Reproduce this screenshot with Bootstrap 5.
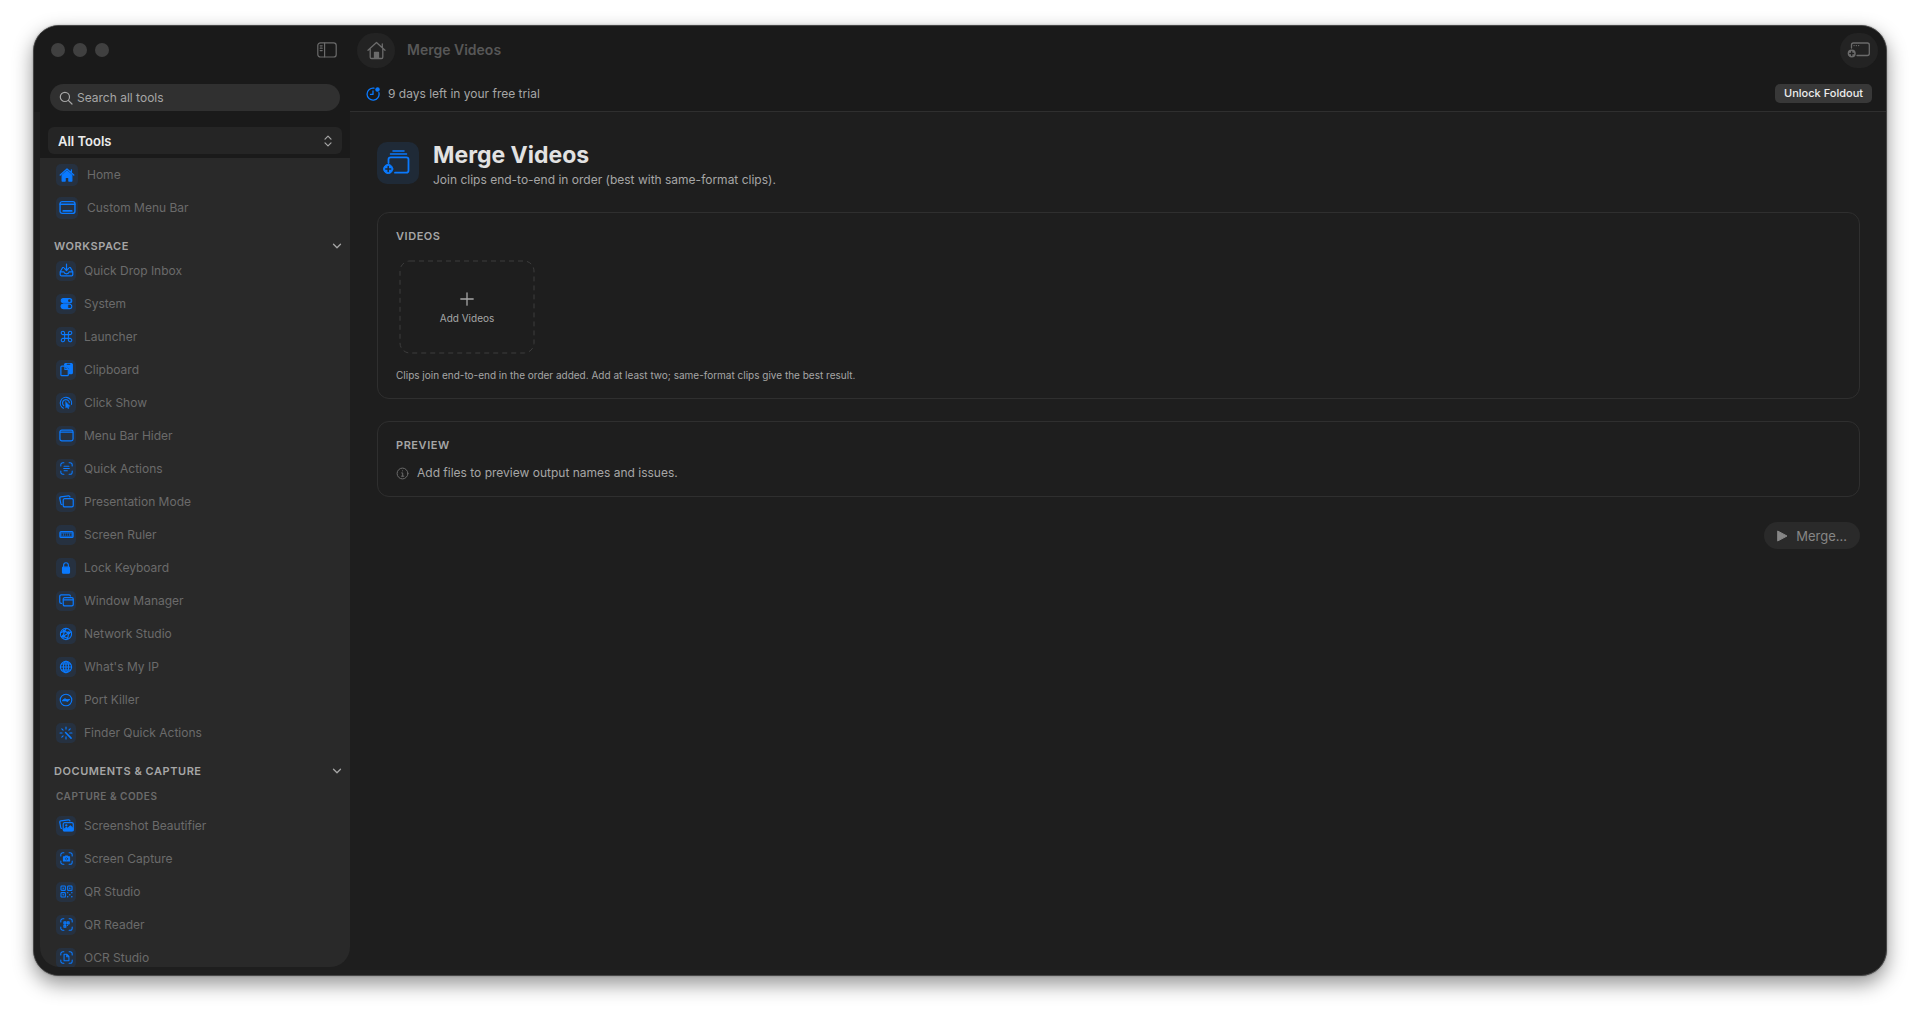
<!DOCTYPE html>
<html lang="en" data-bs-theme="dark">
<head>
<meta charset="utf-8">
<meta name="viewport" content="width=device-width, initial-scale=1">
<title>Merge Videos</title>
<link href="https://cdn.jsdelivr.net/npm/bootstrap@5.3.0/dist/css/bootstrap.min.css" rel="stylesheet">
<style>
  :root { --accent: #0a7aff; --tile: #263140; --bar: #1a1a1a; --pane: #1e1e1e; --muted: #6b6b6b; --soft: #a6a6a6; }
  body { background: #fff; font-family: Inter, "Liberation Sans", sans-serif; font-size: 12px; line-height: 16px; color: var(--soft); padding: 25px 33px 40px; height: 100vh; }
  svg { display: block; fill: none; stroke: currentColor; stroke-linecap: round; stroke-linejoin: round; flex: none; }
  a { color: inherit; text-decoration: none; }
  .app-window { background: var(--pane); border: 1px solid #474747; border-radius: 26px; overflow: hidden; box-shadow: 0 8px 20px rgba(0,0,0,.42), 0 0 2px rgba(0,0,0,.3); }
  .side { width: 316px; padding: 0 0 8px 6px; background: linear-gradient(var(--bar) 86px, var(--pane) 86px); }
  .side-head { background: var(--bar); padding: 0 8px 4px; }
  .side-top { height: 48px; padding: 0 5px 0 3px; }
  .dots { gap: 8px; }
  .dots span { width: 14px; height: 14px; border-radius: 50%; background: #404040; }
  .plain { background: none; border: 0; padding: 0; color: var(--muted); }
  .search-box { background: #303030; border-radius: 14px; height: 27px; margin: 10px 2px 16px; padding: 0 9px; gap: 4px; }
  .search-box input { background: none; border: 0; outline: 0; padding: 0; font-size: 12px; color: var(--soft); width: 100%; }
  .search-box input::placeholder { color: var(--soft); opacity: 1; }
  .picker { position: relative; }
  .picker select { appearance: none; width: 100%; height: 27px; border: 0; border-radius: 6px; background: #252525; color: #ececec; font-weight: 600; font-size: 13px; padding: 0 10px; }
  .picker svg { position: absolute; right: 10px; top: 8px; pointer-events: none; }
  .tool-list { background: #292929; border-radius: 0 0 20px 20px; min-height: 0; overflow-y: auto; scrollbar-width: none; }
  .tool { height: 33px; padding-left: 16px; gap: 8px; color: var(--muted); }
  .tool .tile { width: 20px; height: 20px; border-radius: 5px; }
  .tool svg { stroke-width: 1.3; }
  .tool.wide { gap: 9px; }
  .tool.wide .tile { width: 22px; height: 22px; }
  .tile { background: var(--tile); color: var(--accent); display: flex; align-items: center; justify-content: center; flex: none; }
  .fold { width: 100%; height: 17px; margin-top: 13px; padding: 0 8px 0 14px; color: var(--soft); }
  .caps { font-size: 11px; font-weight: 600; letter-spacing: .05em; margin: 0; line-height: 16px; text-transform: uppercase; color: var(--soft); }
  .subcaps { font-size: 10px; color: var(--muted); padding: 9px 16px 5px; }
  .topbar { background: var(--bar); height: 48px; padding: 0 8px 0 7px; gap: 12px; }
  .round { width: 38px; height: 35px; border: 0; border-radius: 18px; background: #232323; color: var(--muted); padding: 0; display: flex; align-items: center; justify-content: center; }
  .page-name { font-size: 14px; font-weight: 600; color: #575757; }
  .trial { background: var(--bar); border-bottom: 1px solid #2f2f2f; height: 38px; padding: 2px 14px 0 16px; }
  .trial span { gap: 8px; }
  .trial svg { color: var(--accent); }
  .note svg { color: var(--muted); }
  .unlock { border: 0; border-radius: 5px; background: #383838; color: #ececec; font-size: 11px; font-weight: 500; height: 19px; line-height: 19px; padding: 0 9px; }
  .work { padding: 30px 26px 30px 27px; }
  .hero { gap: 14px; margin-bottom: 24px; }
  .hero .tile { width: 42px; height: 42px; border-radius: 10px; background: #1f2a37; }
  .hero h1 { font-size: 23px; line-height: 26px; font-weight: 700; color: #e2e2e2; margin: 0 0 4px; }
  .panel { border: 1px solid #2f2f2f; border-radius: 12px; padding: 15px 18px; margin-bottom: 22px; }
  .drop { width: 136px; height: 94px; border: 0; background: none; margin: 16px 0 13px 3px; position: relative; color: var(--soft); font-size: 10px; gap: 4px; padding: 3px 0 0; }
  .drop .frame { position: absolute; inset: 0; width: 100%; height: 100%; stroke: #3c3c3c; }
  .hint { font-size: 10px; }
  .note { gap: 8px; margin-top: 12px; }
  .merge { border: 0; border-radius: 14px; height: 27px; margin-top: 3px; padding: 0 13px; gap: 8px; background: #2a2a2a; color: #868686; font-size: 13px; }
</style>
</head>
<body class="d-flex">
<svg class="d-none" xmlns="http://www.w3.org/2000/svg">
  <symbol id="i-house" viewBox="0 0 16 16"><path d="M1.2 8 8 2l6.800 6M12.400 5.500V2.800"/><path d="M3.200 8.200 8 4l4.800 4.200V14H9.900v-3.600H6.100V14H3.200z" fill="currentColor"/></symbol>
  <symbol id="i-menubar" viewBox="0 0 16 16"><rect x="1" y="2.500" width="14" height="11" rx="2"/><path d="M1 5h14" /><path d="M4 11.200h8" stroke-width="1.600"/></symbol>
  <symbol id="i-inbox" viewBox="0 0 16 16"><path d="M8 1.200v6.600M5.800 5.800 8 8l2.200-2.200M5 4.800H3.900L1.300 9.300v3.200c0 .8.500 1.300 1.300 1.300h10.800c.8 0 1.300-.5 1.300-1.300V9.300L12.100 4.800H11M1.300 9.500h3.900c.3 1.400 1.400 2 2.800 2s2.500-.6 2.800-2h3.900"/></symbol>
  <symbol id="i-switches" viewBox="0 0 16 16"><rect x="1.500" y="1.800" width="13" height="5.400" rx="2.700" fill="currentColor"/><circle cx="11.500" cy="4.500" r="1.600" fill="#263140" stroke="none"/><rect x="1.500" y="8.900" width="13" height="5.400" rx="2.700"/><path d="M4 9h5.500v5H4a2.500 2.500 0 0 1 0-5z" fill="currentColor"/></symbol>
  <symbol id="i-command" viewBox="0 0 16 16"><path d="M5.700 5.700h4.600v4.600H5.700zM5.700 5.700H3.800a2.100 2.100 0 1 1 1.900-1.900zM10.300 5.700V3.800a2.100 2.100 0 1 1 1.900 1.900zM10.300 10.300h1.900a2.100 2.100 0 1 1-1.900 1.900zM5.700 10.300v1.900a2.100 2.100 0 1 1-1.900-1.900z"/></symbol>
  <symbol id="i-clipboard" viewBox="0 0 16 16"><path d="M6 3.500V2.600c0-.6.400-1 1-1h6.200c.6 0 1 .4 1 1v8.900c0 .6-.4 1-1 1H11V7L7.500 4z" fill="currentColor"/><path d="M8.800 2.400h2.600" stroke="#263140"/><path d="M3 4.500h3.500L9.900 8v5.500c0 .6-.4 1-1 1H3c-.6 0-1-.4-1-1v-8c0-.6.400-1 1-1z" fill="#263140"/><path d="M6.300 4.700V8h3.500"/></symbol>
  <symbol id="i-click" viewBox="0 0 16 16"><path d="M5 13.900A6.500 6.500 0 1 1 14.300 9.500M5.400 11A3.900 3.900 0 1 1 11.800 7.500"/><path d="m7.600 6.600.2 7 1.500-1.300.9 2.100 1.200-.5-.9-2 1.900-.3z" fill="currentColor" stroke-width=".6"/></symbol>
  <symbol id="i-window" viewBox="0 0 16 16"><rect x="1" y="2.300" width="14" height="11.400" rx="2"/><path d="M1.500 4.400h13" stroke-width="1.500"/></symbol>
  <symbol id="i-frame" viewBox="0 0 16 16"><path d="M1 4.800V3.500C1 2 2 1 3.500 1h1.300M11.200 1h1.300C14 1 15 2 15 3.500v1.300M15 11.200v1.300c0 1.500-1 2.500-2.500 2.500h-1.300M4.800 15H3.500C2 15 1 14 1 12.500v-1.300"/></symbol>
  <symbol id="i-textscan" viewBox="0 0 16 16"><use href="#i-frame"/><path d="M5 5.300h6M4.500 8h7M5 10.700h4"/></symbol>
  <symbol id="i-stack" viewBox="0 0 16 16"><rect x="4.500" y="5" width="10.700" height="8.800" rx="1.500"/><path d="M3.200 11.300c-.8 0-1.200-.5-1.300-1.200L.8 4.500c-.1-.8.300-1.400 1.100-1.500l8.200-1c.8-.1 1.400.4 1.600 1.200"/></symbol>
  <symbol id="i-ruler" viewBox="0 0 16 16"><rect x="1" y="4.800" width="14" height="6.400" rx="1.200" fill="#1259b0"/><path d="M3.500 7.500v1.200M6 7.500v1.200M8 7.500v1.200M10 7.500v1.200M12.500 7.500v1.200" stroke="#263140"/></symbol>
  <symbol id="i-lock" viewBox="0 0 16 16"><rect x="4" y="7" width="8" height="7" rx="1" fill="currentColor"/><path d="M5.300 7V4.700a2.700 2.700 0 0 1 5.400 0V7"/></symbol>
  <symbol id="i-windows" viewBox="0 0 16 16"><rect x="4.500" y="5" width="10.700" height="8.800" rx="1.500"/><path d="M4.700 7.300h10.200M2.800 11H2.300C1.400 11 .8 10.400.8 9.500v-6C.8 2.600 1.400 2 2.300 2h8.500c.8 0 1.300.5 1.400 1.200"/></symbol>
  <symbol id="i-globe" viewBox="0 0 16 16"><circle cx="8" cy="8" r="6.400"/><ellipse cx="8" cy="8" rx="3" ry="6.400"/><path d="M8 1.600v12.800M1.600 8h12.800M2.700 4.600h10.600M2.700 11.400h10.600"/></symbol>
  <symbol id="i-network" viewBox="0 0 16 16"><circle cx="8" cy="8" r="6.400"/><path d="M1.800 6.500 6 4.700l5 2 3.300-.9M6 4.700 8.500 1.700M6 4.700l-1 5.800 5 2.600M11 6.700l-1 6.400M5 10.500l6-3.800M2.500 11l2.500-.5"/><circle cx="6" cy="4.700" r="1" fill="currentColor"/><circle cx="11" cy="6.700" r="1.200" fill="currentColor"/><circle cx="5" cy="10.500" r="1.200" fill="currentColor"/></symbol>
  <symbol id="i-port" viewBox="0 0 16 16"><circle cx="8" cy="8" r="6.600"/><path d="M4 8.700 6.700 6.700l2.300 1.200 3-.4-2.500 2-2.200-1z" fill="currentColor"/></symbol>
  <symbol id="i-wand" viewBox="0 0 16 16"><path d="m7.500 7.500 6.300 6.300" stroke-width="1.800"/><path d="M8 1.200v2.300M8 12.300v2.500M1.200 8h2.300M12.300 8h2.500M3.200 3.200 4.700 4.700M12.800 3.200l-1.500 1.500M3.200 12.800l1.500-1.500"/></symbol>
  <symbol id="i-photos" viewBox="0 0 16 16"><rect x="4.500" y="5" width="10.700" height="8.800" rx="1.500"/><path d="M2.800 11c-.6 0-.9-.5-1-1.100L.8 4.500c-.1-.8.300-1.400 1.100-1.500l8.200-1c.8-.1 1.400.4 1.600 1.200"/><path d="m4.800 12.500 3-2.500 1.700 1.200 2.600-2.700 2.800 2.700v2.300H5z" fill="currentColor"/><circle cx="7.800" cy="7.800" r=".6" fill="currentColor"/></symbol>
  <symbol id="i-camscan" viewBox="0 0 16 16"><use href="#i-frame"/><path d="M4.200 6h1.700l.8-1h2.600l.8 1h1.700v5H4.200z" fill="currentColor"/><circle cx="8" cy="8.400" r="1.400" stroke="#263140" stroke-width=".7"/></symbol>
  <symbol id="i-qr" viewBox="0 0 16 16"><rect x="1.200" y="1.200" width="5.400" height="5.400" rx=".8"/><rect x="9.400" y="1.200" width="5.400" height="5.400" rx=".8"/><rect x="1.200" y="9.400" width="5.400" height="5.400" rx=".8"/><path d="M3.900 3.900h.1M12 3.900h.1M3.900 12h.1M9.400 9.400h.1M14.500 9.400h.1M12 12h.1M9.400 14.500h.1M14.500 14.500h.1" stroke-width="1.800"/></symbol>
  <symbol id="i-qrscan" viewBox="0 0 16 16"><use href="#i-frame"/><path d="M4.800 4.800h2.400v2.400H4.800zM8.900 4.800h2.400v2.400H8.900zM4.800 8.900h2.400v2.400H4.800zM9.200 9.200h.2" fill="currentColor" fill-opacity=".5"/></symbol>
  <symbol id="i-docscan" viewBox="0 0 16 16"><use href="#i-frame"/><path d="M5 4h3.500L11 6.500V12H5zM8.300 4.200V7H11"/></symbol>
  <symbol id="i-chev" viewBox="0 0 10 10"><path d="m1.500 3.300 3.500 3.500 3.500-3.500"/></symbol>
</svg>

<div class="app-window d-flex flex-grow-1">
  <aside class="side d-flex flex-column flex-shrink-0">
    <div class="side-head">
      <div class="side-top d-flex align-items-center justify-content-between">
        <div class="dots d-flex"><span></span><span></span><span></span></div>
        <button class="plain" type="button" aria-label="Toggle sidebar">
          <svg width="20" height="16" viewBox="0 0 20 16" stroke-width="1.200"><rect x=".8" y=".8" width="18.400" height="14.200" rx="2.600"/><path d="M7.600 1v13.800M3.200 3.800h2M3.200 6.200h2M3.200 8.600h2"/></svg>
        </button>
      </div>
      <div class="search-box d-flex align-items-center">
        <svg width="14" height="14" viewBox="0 0 14 14" stroke-width="1.200"><circle cx="5.900" cy="5.900" r="4.600"/><path d="m9.300 9.300 3.700 3.700"/></svg>
        <input type="text" placeholder="Search all tools" aria-label="Search all tools">
      </div>
      <div class="picker">
        <select aria-label="Tool group"><option>All Tools</option></select>
        <svg width="8" height="12" viewBox="0 0 8 12" stroke-width="1.200"><path d="M1 4.200 4 1.200l3 3M1 7.800l3 3 3-3"/></svg>
      </div>
    </div>
    <nav class="tool-list flex-grow-1" aria-label="Tools">
      <a href="#" class="tool wide d-flex align-items-center"><span class="tile"><svg width="16" height="16"><use href="#i-house"/></svg></span>Home</a>
      <a href="#" class="tool wide d-flex align-items-center"><span class="tile"><svg width="17" height="17"><use href="#i-menubar"/></svg></span>Custom Menu Bar</a>
      <button type="button" class="plain fold d-flex align-items-center justify-content-between"><span class="caps">Workspace</span><svg width="10" height="10" stroke-width="1.300"><use href="#i-chev"/></svg></button>
      <a href="#" class="tool d-flex align-items-center"><span class="tile"><svg width="15" height="15"><use href="#i-inbox"/></svg></span>Quick Drop Inbox</a>
      <a href="#" class="tool d-flex align-items-center"><span class="tile"><svg width="13" height="13"><use href="#i-switches"/></svg></span>System</a>
      <a href="#" class="tool d-flex align-items-center"><span class="tile"><svg width="13" height="13"><use href="#i-command"/></svg></span>Launcher</a>
      <a href="#" class="tool d-flex align-items-center"><span class="tile"><svg width="15" height="15"><use href="#i-clipboard"/></svg></span>Clipboard</a>
      <a href="#" class="tool d-flex align-items-center"><span class="tile"><svg width="14" height="14"><use href="#i-click"/></svg></span>Click Show</a>
      <a href="#" class="tool d-flex align-items-center"><span class="tile"><svg width="15" height="15"><use href="#i-window"/></svg></span>Menu Bar Hider</a>
      <a href="#" class="tool d-flex align-items-center"><span class="tile"><svg width="13" height="13"><use href="#i-textscan"/></svg></span>Quick Actions</a>
      <a href="#" class="tool d-flex align-items-center"><span class="tile"><svg width="15" height="15"><use href="#i-stack"/></svg></span>Presentation Mode</a>
      <a href="#" class="tool d-flex align-items-center"><span class="tile"><svg width="15" height="15"><use href="#i-ruler"/></svg></span>Screen Ruler</a>
      <a href="#" class="tool d-flex align-items-center"><span class="tile"><svg width="14" height="14"><use href="#i-lock"/></svg></span>Lock Keyboard</a>
      <a href="#" class="tool d-flex align-items-center"><span class="tile"><svg width="15" height="15"><use href="#i-windows"/></svg></span>Window Manager</a>
      <a href="#" class="tool d-flex align-items-center"><span class="tile"><svg width="14" height="14"><use href="#i-network"/></svg></span>Network Studio</a>
      <a href="#" class="tool d-flex align-items-center"><span class="tile"><svg width="14" height="14"><use href="#i-globe"/></svg></span>What's My IP</a>
      <a href="#" class="tool d-flex align-items-center"><span class="tile"><svg width="14" height="14"><use href="#i-port"/></svg></span>Port Killer</a>
      <a href="#" class="tool d-flex align-items-center"><span class="tile"><svg width="14" height="14"><use href="#i-wand"/></svg></span>Finder Quick Actions</a>
      <button type="button" class="plain fold d-flex align-items-center justify-content-between"><span class="caps">Documents &amp; Capture</span><svg width="10" height="10" stroke-width="1.300"><use href="#i-chev"/></svg></button>
      <h3 class="caps subcaps">Capture &amp; Codes</h3>
      <a href="#" class="tool d-flex align-items-center"><span class="tile"><svg width="15" height="15"><use href="#i-photos"/></svg></span>Screenshot Beautifier</a>
      <a href="#" class="tool d-flex align-items-center"><span class="tile"><svg width="13" height="13"><use href="#i-camscan"/></svg></span>Screen Capture</a>
      <a href="#" class="tool d-flex align-items-center"><span class="tile"><svg width="13" height="13"><use href="#i-qr"/></svg></span>QR Studio</a>
      <a href="#" class="tool d-flex align-items-center"><span class="tile"><svg width="13" height="13"><use href="#i-qrscan"/></svg></span>QR Reader</a>
      <a href="#" class="tool d-flex align-items-center"><span class="tile"><svg width="13" height="13"><use href="#i-docscan"/></svg></span>OCR Studio</a>
    </nav>
  </aside>

  <main class="flex-grow-1">
    <header class="topbar d-flex align-items-center">
      <button class="round" type="button" aria-label="Home"><svg width="19" height="19" viewBox="0 0 19 19" stroke-width="1.300"><path d="M1 9.200 9.500 1.500 18 9.200M15.300 6.500V3M3.200 7.800v8.400c0 .8.500 1.300 1.300 1.300h10c.8 0 1.300-.5 1.300-1.300V7.800"/><path d="M7.500 17v-5.500h4V17z" fill="currentColor"/></svg></button>
      <span class="page-name">Merge Videos</span>
      <button class="round ms-auto" type="button" aria-label="New window"><svg width="24" height="18" viewBox="0 0 24 18" stroke-width="1.300"><path d="M4.500 7V4c0-1.200.8-2 2-2h13.800c1.200 0 2 .8 2 2v8.500c0 1.200-.8 2-2 2H10"/><path d="M7 4.600h.1M9.300 4.600h.1M11.600 4.600h.1"/><circle cx="4.700" cy="12.500" r="3.400" fill="currentColor"/><path d="M4.700 10.600v3.800M2.800 12.500h3.800" stroke="#232323"/></svg></button>
    </header>
    <div class="trial d-flex align-items-center justify-content-between">
      <span class="d-flex align-items-center"><svg width="14" height="14" viewBox="0 0 14 14" stroke-width="1.300"><path d="M8 1.200a6 6 0 1 0 4.900 4.500M7 4v3.400H4.500"/><circle cx="11.500" cy="2.500" r="1.600" fill="currentColor"/></svg>9 days left in your free trial</span>
      <button class="unlock" type="button">Unlock Foldout</button>
    </div>
    <div class="work">
      <div class="hero d-flex">
        <span class="tile"><svg width="30" height="30" viewBox="0 0 30 30" stroke-width="1.800"><path d="M5.500 15v-3.500c0-1.400.8-2.200 2.200-2.200h15.600c1.400 0 2.200.8 2.200 2.200v11c0 1.400-.8 2.200-2.200 2.200H12"/><path d="M7.500 6h16M10 3h11" stroke-width="1.500"/><circle cx="5.200" cy="21" r="4.600" fill="currentColor" stroke-width="1"/><path d="M5.200 18.500v5M2.700 21h5" stroke="#1f2a37" stroke-width="1.500"/></svg></span>
        <div><h1>Merge Videos</h1><p class="m-0">Join clips end-to-end in order (best with same-format clips).</p></div>
      </div>
      <section class="panel">
        <h2 class="caps">Videos</h2>
        <button type="button" class="drop d-flex flex-column align-items-center justify-content-center">
          <svg class="frame"><rect x="1" y="1" width="134" height="92" rx="10" stroke-dasharray="5 4" stroke-linecap="butt"/></svg>
          <svg width="14" height="14" viewBox="0 0 14 14" stroke-width="1.300"><path d="M7 .8v12.400M.8 7h12.400"/></svg>
          Add Videos
        </button>
        <p class="hint m-0">Clips join end-to-end in the order added. Add at least two; same-format clips give the best result.</p>
      </section>
      <section class="panel">
        <h2 class="caps">Preview</h2>
        <p class="note d-flex align-items-center mb-0"><svg width="13" height="13" viewBox="0 0 13 13"><circle cx="6.500" cy="6.500" r="5.400"/><path d="M5.700 5.900h1v3.300M5.500 9.200h2.300M6.500 3.800v.1"/></svg>Add files to preview output names and issues.</p>
      </section>
      <div class="d-flex justify-content-end">
        <button type="button" class="merge d-flex align-items-center"><svg width="11" height="12" viewBox="0 0 11 12"><path d="M1 1.200 10 6l-9 4.800z" fill="currentColor"/></svg>Merge…</button>
      </div>
    </div>
  </main>
</div>
<script src="https://cdn.jsdelivr.net/npm/bootstrap@5.3.0/dist/js/bootstrap.bundle.min.js"></script>
</body>
</html>
